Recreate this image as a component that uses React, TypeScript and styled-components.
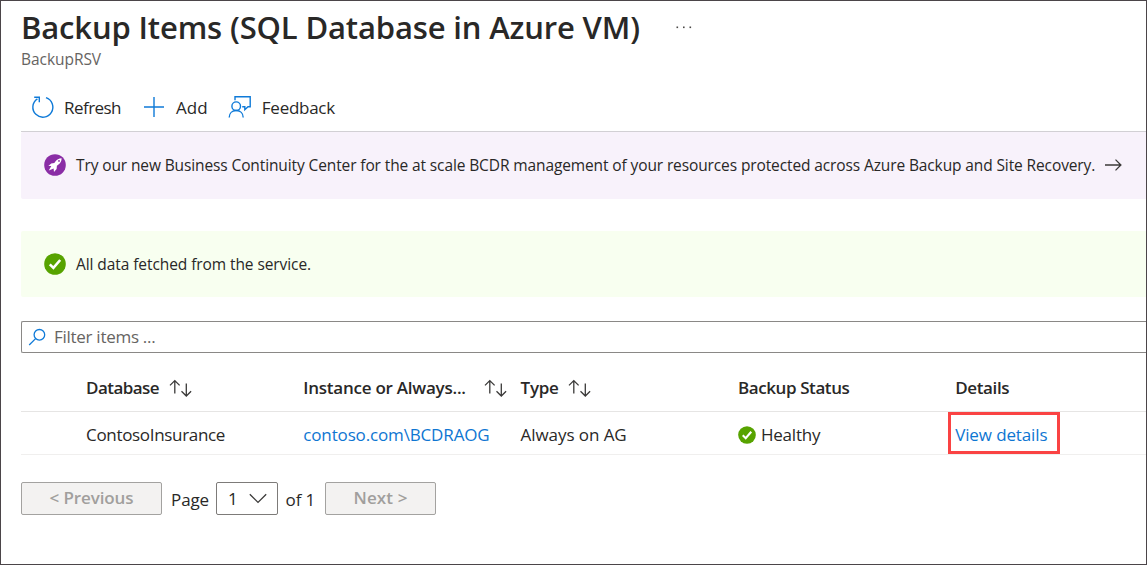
import React from "react";
import styled, { createGlobalStyle } from "styled-components";

const GlobalStyle = createGlobalStyle`
  *, *::after { box-sizing: border-box; }
  body { margin: 0; background: #fff; }
  button, input, select { font: inherit; }
`;

const Page = styled.main`
  height: 565px;
  border: 1px solid #4b4549;
  padding: 6px 0 0 20px;
  overflow: hidden;
  background: #fff;
  color: #292827;
  font-family: "Open Sans", "Noto Sans", sans-serif;
  font-size: 17px;
`;

const Text = styled.span<{ $track?: number }>`
  letter-spacing: ${(p) => p.$track ?? 0}px;
  white-space: nowrap;
`;

const TitleRow = styled.header`
  display: flex;
  align-items: center;
  gap: 36px;
  height: 40px;
`;

const Title = styled.h1`
  margin: 0;
  font-size: 31px;
  line-height: 40px;
  font-weight: 600;
  letter-spacing: -0.15px;
  white-space: nowrap;
`;

const Subtitle = styled.div`
  height: 24px;
  line-height: 24px;
  font-size: 15.5px;
  letter-spacing: -0.05px;
  color: #666462;
`;

const Toolbar = styled.div`
  display: flex;
  align-items: center;
  height: 48px;
  margin-top: 13px;
  padding: 0 0 1px 10px;
  border-bottom: 1px solid #d2d0d4;
`;

const Command = styled.button<{ $gap: number; $after?: number }>`
  display: flex;
  align-items: center;
  gap: ${(p) => p.$gap}px;
  margin: 0 ${(p) => p.$after ?? 0}px 0 0;
  padding: 0;
  border: 0;
  background: none;
  color: inherit;
  line-height: 24px;
`;

const CommandLabel = styled(Text)`
  padding-top: 1px;
`;

const Icon = styled.svg`
  display: block;
  flex: none;
`;

const Banner = styled.section<{ $tone: "purple" | "green" }>`
  display: flex;
  align-items: center;
  height: ${(p) => (p.$tone === "purple" ? 67 : 66)}px;
  margin-bottom: ${(p) => (p.$tone === "purple" ? 32 : 24)}px;
  padding: 0 0 1px 23px;
  border-radius: 2px 0 0 2px;
  background: ${(p) => (p.$tone === "purple" ? "#f8f2fb" : "#f8fff0")};
  font-size: 15.5px;
  line-height: 22px;
`;

const BannerText = styled(Text)`
  margin: 0 10px 0 10px;
`;

const FilterBox = styled.div`
  display: flex;
  align-items: center;
  gap: 8px;
  height: 32px;
  padding: 0 0 1px 6px;
  border: 1px solid #8a8886;
  border-right: 0;
  border-radius: 2px 0 0 2px;
  color: #666462;
  line-height: 24px;
`;

const Grid = styled.div`
  margin-top: 11px;
`;

const GridRow = styled.div<{ $head?: boolean }>`
  display: grid;
  grid-template-columns: repeat(4, 217.3px) 1fr;
  align-items: center;
  height: ${(p) => (p.$head ? 48 : 43)}px;
  padding: ${(p) => (p.$head ? 0 : 3)}px 0 0 65px;
  border-bottom: 1px solid ${(p) => (p.$head ? "#e6e5e4" : "#f0efee")};
  font-weight: ${(p) => (p.$head ? 600 : 400)};
  line-height: 24px;
`;

const Cell = styled.div<{ $gap?: number }>`
  display: flex;
  align-items: center;
  gap: ${(p) => p.$gap ?? 0}px;
`;

const Link = styled(Text)`
  color: #0e76d2;
`;

const DetailsLink = styled(Link)`
  position: relative;
  &::after {
    content: "";
    position: absolute;
    left: -7px;
    top: -11px;
    width: 112px;
    height: 42px;
    border: 3px solid #fa4343;
  }
`;

const Pager = styled.nav`
  display: flex;
  align-items: center;
  height: 33px;
  margin-top: 27px;
  line-height: 24px;
`;

const PagerButton = styled.button<{ $width: number }>`
  width: ${(p) => p.$width}px;
  height: 33px;
  padding: 0 0 2px;
  border: 1px solid #a3a2a0;
  border-radius: 2px;
  background: #f3f2f1;
  color: #a19f9d;
  font-weight: 600;
  line-height: 24px;
`;

const PagerLabel = styled(Text)<{ $width: number; $indent: number }>`
  width: ${(p) => p.$width}px;
  padding: 2px 0 0 ${(p) => p.$indent}px;
`;

const PageSelect = styled.div`
  display: flex;
  align-items: center;
  justify-content: space-between;
  width: 62px;
  height: 33px;
  padding: 0 10px 0 11px;
  border: 1px solid #7d7b79;
  border-radius: 2px;
`;

const MoreIcon = () => (
  <Icon width="16" height="4" viewBox="0 0 16 4" fill="#4a4846">
    <rect x="0.5" y="1.5" width="1.6" height="1.6" />
    <rect x="7" y="1.5" width="1.6" height="1.6" />
    <rect x="13.5" y="1.5" width="1.6" height="1.6" />
  </Icon>
);

const RefreshIcon = () => (
  <Icon width="24" height="24" viewBox="0 0 24 24" fill="none" stroke="#0f7ad8" strokeWidth="1.4">
    <path d="M15 2.7A10 10 0 1 1 6.4 3.8" />
    <path d="M3.2 2.3H8.3V7.3" />
  </Icon>
);

const AddIcon = () => (
  <Icon width="22" height="22" viewBox="0 0 22 22" stroke="#0f7ad8" strokeWidth="1.4">
    <path d="M1 11H21M11 1V21" />
  </Icon>
);

const FeedbackIcon = () => (
  <Icon width="24" height="24" viewBox="0 0 24 24" fill="none" stroke="#0f7ad8" strokeWidth="1.4">
    <path d="M7 5.2V1.7H22.2V11.7H20L16.8 14.7V11.7H14.2" />
    <circle cx="8.2" cy="11.2" r="4.3" />
    <path d="M1.2 22.5C1.2 18.2 4.2 15.5 8.2 15.5S15.2 18.2 15.2 22.5" />
  </Icon>
);

const RocketIcon = () => (
  <Icon width="22" height="22" viewBox="0 0 22 22">
    <circle cx="11" cy="11" r="10.8" fill="#8a2da5" />
    <path
      d="M17.6 4.3C14.9 4.3 12.8 5.6 11.2 7.8L10.3 9.1L7.2 9.4L4.4 12.1L7.3 12L6.6 13.2L4.8 16.6L8.4 14.9L9.6 14.4L10 17.9L12.6 14.9L12.9 11.7L14.2 10.8C16.4 9.1 17.7 7 17.6 4.3Z"
      fill="#fff"
    />
    <circle cx="15" cy="6.9" r="0.9" fill="#8a2da5" />
  </Icon>
);

const CheckIcon = ({ size }: { size: number }) => (
  <Icon width={size} height={size} viewBox="0 0 22 22">
    <circle cx="11" cy="11" r="10.8" fill="#57a300" />
    <path d="M5.8 11.4L9.4 14.9L16.2 7" fill="none" stroke="#fff" strokeWidth="2.6" />
  </Icon>
);

const ArrowIcon = () => (
  <Icon width="18" height="14" viewBox="0 0 18 14" fill="none" stroke="#3b3a39" strokeWidth="1.3">
    <path d="M0 7H15.8M10.5 1.6L15.9 7L10.5 12.4" />
  </Icon>
);

const SearchIcon = () => (
  <Icon width="18" height="18" viewBox="0 0 18 18" fill="none" stroke="#0f7ad8" strokeWidth="1.3">
    <circle cx="11.4" cy="6.8" r="5.3" />
    <path d="M7.6 10.6L1.2 17" />
  </Icon>
);

const SortIcon = () => (
  <Icon width="23" height="18" viewBox="0 0 23 18" fill="none" stroke="#3b3a39" strokeWidth="1.3">
    <path d="M5.8 14.5V2M1 6.4L5.8 1.6L10.6 6.4" />
    <path d="M17.3 4.5V17M12.5 12.2L17.3 17L22.1 12.2" />
  </Icon>
);

const ChevronIcon = () => (
  <Icon width="18" height="11" viewBox="0 0 18 11" fill="none" stroke="#3b3a39" strokeWidth="1.3">
    <path d="M0.8 1.2L9 9.4L17.2 1.2" />
  </Icon>
);

export default function App() {
  return (
    <Page>
      <GlobalStyle />
      <TitleRow>
        <Title>Backup Items (SQL Database in Azure VM)</Title>
        <MoreIcon />
      </TitleRow>
      <Subtitle>BackupRSV</Subtitle>

      <Toolbar>
        <Command $gap={9} $after={22}>
          <RefreshIcon />
          <CommandLabel $track={-0.54}>Refresh</CommandLabel>
        </Command>
        <Command $gap={11} $after={20}>
          <AddIcon />
          <CommandLabel $track={0.1}>Add</CommandLabel>
        </Command>
        <Command $gap={10}>
          <FeedbackIcon />
          <CommandLabel $track={-0.27}>Feedback</CommandLabel>
        </Command>
      </Toolbar>

      <Banner $tone="purple">
        <RocketIcon />
        <BannerText $track={-0.115}>
          Try our new Business Continuity Center for the at scale BCDR management of your resources
          protected across Azure Backup and Site Recovery.
        </BannerText>
        <ArrowIcon />
      </Banner>
      <Banner $tone="green">
        <CheckIcon size={22} />
        <BannerText $track={-0.08}>All data fetched from the service.</BannerText>
      </Banner>

      <FilterBox>
        <SearchIcon />
        <Text $track={-0.28}>Filter items ...</Text>
      </FilterBox>

      <Grid>
        <GridRow $head>
          <Cell $gap={10}>
            <Text $track={-0.55}>Database</Text>
            <SortIcon />
          </Cell>
          <Cell $gap={18}>
            <Text $track={-0.24}>Instance or Always...</Text>
            <SortIcon />
          </Cell>
          <Cell $gap={9}>
            <Text $track={-0.27}>Type</Text>
            <SortIcon />
          </Cell>
          <Cell>
            <Text $track={-0.4}>Backup Status</Text>
          </Cell>
          <Cell>
            <Text $track={-0.37}>Details</Text>
          </Cell>
        </GridRow>
        <GridRow>
          <Cell>
            <Text $track={-0.32}>ContosoInsurance</Text>
          </Cell>
          <Cell>
            <Link $track={-0.15}>contoso.com\BCDRAOG</Link>
          </Cell>
          <Cell>
            <Text $track={-0.07}>Always on AG</Text>
          </Cell>
          <Cell $gap={5}>
            <CheckIcon size={18} />
            <Text $track={-0.2}>Healthy</Text>
          </Cell>
          <Cell>
            <DetailsLink $track={-0.12}>View details</DetailsLink>
          </Cell>
        </GridRow>
      </Grid>

      <Pager>
        <PagerButton $width={141}>
          <Text $track={-0.1}>&lt; Previous</Text>
        </PagerButton>
        <PagerLabel $width={54} $indent={9} $track={-0.1}>Page</PagerLabel>
        <PageSelect>
          <Text>1</Text>
          <ChevronIcon />
        </PageSelect>
        <PagerLabel $width={47} $indent={7.5} $track={-0.1}>of 1</PagerLabel>
        <PagerButton $width={111}>
          <Text $track={0.1}>Next &gt;</Text>
        </PagerButton>
      </Pager>
    </Page>
  );
}
